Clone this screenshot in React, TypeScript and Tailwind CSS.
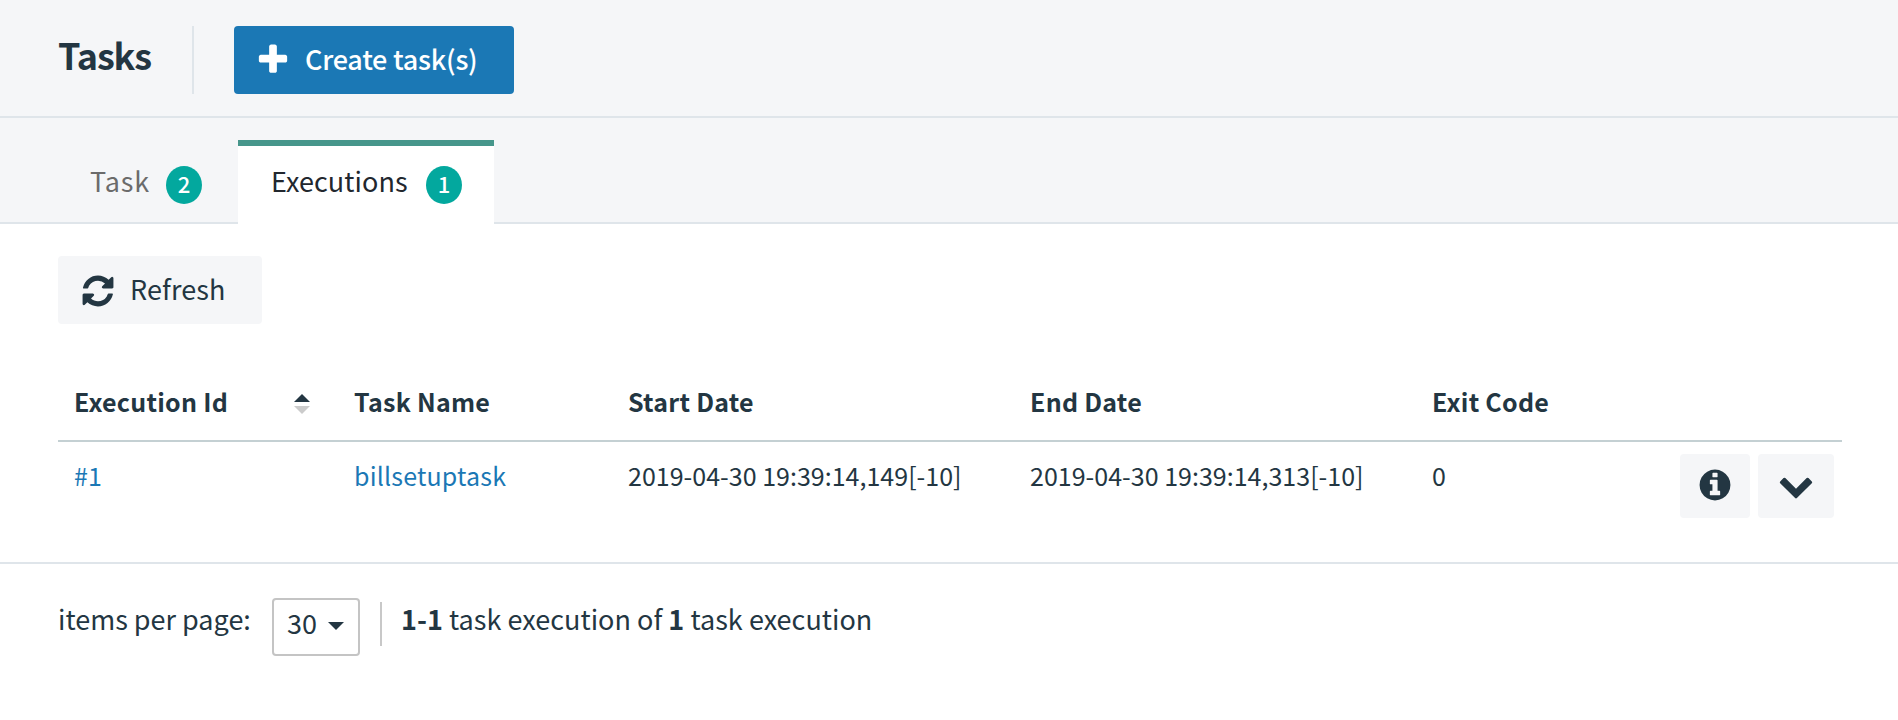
import type { ReactNode } from "react";

function Icon({ d, className }: { d: string; className: string }) {
  return (
    <svg viewBox="0 0 1792 1792" fill="currentColor" className={className} aria-hidden="true">
      <path d={d} />
    </svg>
  );
}

const PLUS =
  "M1600 736v192q0 40-28 68t-68 28h-416v416q0 40-28 68t-68 28h-192q-40 0-68-28t-28-68v-416h-416q-40 0-68-28t-28-68v-192q0-40 28-68t68-28h416v-416q0-40 28-68t68-28h192q40 0 68 28t28 68v416h416q40 0 68 28t28 68z";
const REFRESH =
  "M1639 1056q0 5-1 7-64 268-268 434.5t-478 166.5q-146 0-282.5-55t-243.5-157l-129 129q-19 19-45 19t-45-19-19-45v-448q0-26 19-45t45-19h448q26 0 45 19t19 45-19 45l-137 137q71 66 161 102t187 36q134 0 250-65t186-179q11-17 53-117 8-23 30-23h192q13 0 22.5 9.5t9.5 22.5zm25-800v448q0 26-19 45t-45 19h-448q-26 0-45-19t-19-45 19-45l138-138q-148-137-349-137-134 0-250 65t-186 179q-11 17-53 117-8 23-30 23h-199q-13 0-22.5-9.5t-9.5-22.5v-7q65-268 270-434.5t480-166.5q146 0 284 55.5t245 156.5l130-129q19-19 45-19t45 19 19 45z";
const CHEVRON =
  "M1683 808l-742 741q-19 19-45 19t-45-19l-742-741q-19-19-19-45.5t19-45.5l166-165q19-19 45-19t45 19l531 531 531-531q19-19 45-19t45 19l166 165q19 19 19 45.5t-19 45.5z";
const INFO =
  "M1152 1376v-160q0-14-9-23t-23-9h-96v-512q0-14-9-23t-23-9h-320q-14 0-23 9t-9 23v160q0 14 9 23t23 9h96v320h-96q-14 0-23 9t-9 23v160q0 14 9 23t23 9h448q14 0 23-9t9-23zm-128-896v-160q0-14-9-23t-23-9h-192q-14 0-23 9t-9 23v160q0 14 9 23t23 9h192q14 0 23-9t9-23zm640 416q0 209-103 385.5t-279.5 279.5-385.5 103-385.5-103-279.5-279.5-103-385.5 103-385.5 279.5-279.5 385.5-103 385.5 103 279.5 279.5 103 385.5z";

function Badge({ children }: { children: ReactNode }) {
  return (
    <span className="h-[38px] w-9 rounded-[50%] bg-[#03a89e] text-center text-[22px] leading-[35px] font-medium text-white">
      {children}
    </span>
  );
}

export default function App() {
  return (
    <div className="h-[720px] w-full overflow-hidden bg-white font-['Noto_Sans_CJK_SC',sans-serif] text-[27px] whitespace-nowrap text-[#233642]">
      <header className="flex h-[118px] border-b-2 border-[#dfe5ea] bg-[#f5f6f8] pt-[26px] pl-[58px]">
        <h1 className="h-[68px] w-[136px] border-r-2 border-[#dfe5ea] text-[36px] leading-[57px] font-bold tracking-[-1.1px]">
          Tasks
        </h1>
        <button className="ml-10 flex h-[68px] w-[280px] items-center rounded bg-[#1b78b5] pl-[21px] text-white">
          <Icon d={PLUS} className="-mt-px h-9 w-9" />
          <span className="ml-[14px] pb-[2px] leading-[64px] font-medium tracking-[-0.25px]">Create task(s)</span>
        </button>
      </header>

      <nav className="flex h-[106px] items-end bg-[#f5f6f8]">
        <div className="flex h-[84px] w-[238px] items-start border-b-2 border-[#dfe5ea] pt-[26px] pl-[90px] text-[#6b6b6b]">
          <span className="w-[76px] leading-[29px] tracking-[0.8px]">Task</span>
          <Badge>2</Badge>
        </div>
        <div className="flex h-[84px] w-[256px] items-start border-t-[6px] border-[#46968b] bg-white pt-5 pl-[33px] text-[#22272e]">
          <span className="w-[155px] leading-[29px] tracking-[0.05px]">Executions</span>
          <Badge>1</Badge>
        </div>
        <div className="h-[84px] flex-1 border-b-2 border-[#dfe5ea]" />
      </nav>

      <main className="h-[340px] border-b-2 border-[#dfe5ea] pt-8 pl-[58px]">
        <button className="flex h-[68px] w-[204px] items-center rounded bg-[#f5f6f8] pl-[22px]">
          <Icon d={REFRESH} className="mt-px h-9 w-9" />
          <span className="ml-[14px] pb-[2px] leading-[64px] tracking-[0.1px]">Refresh</span>
        </button>

        <div className="mt-[42px] w-[1784px] text-[25px]">
          <div className="grid h-[76px] grid-cols-[280px_274px_402px_402px_1fr] border-b-2 border-[#c4d0d3] pl-4 leading-[71px] font-bold tracking-[0.25px]">
            <div className="flex items-start justify-between pr-[44px]">
              <span>Execution Id</span>
              <svg viewBox="0 0 16 20" className="mt-7 h-5 w-4" aria-hidden="true">
                <path d="M0 8L8 0L16 8Z" fill="#233642" />
                <path d="M0 12L8 20L16 12Z" fill="#cbcbcb" />
              </svg>
            </div>
            <span>Task Name</span>
            <span>Start Date</span>
            <span>End Date</span>
            <span>Exit Code</span>
          </div>
          <div className="grid grid-cols-[280px_274px_402px_402px_1fr] pl-4 leading-[67px]">
            <a className="text-[#1b78b5]">#1</a>
            <a className="tracking-[0.18px] text-[#1b78b5]">billsetuptask</a>
            <span className="tracking-[0.02px]">2019-04-30 19:39:14,149[-10]</span>
            <span className="tracking-[0.02px]">2019-04-30 19:39:14,313[-10]</span>
            <div className="flex">
              <span className="w-[248px]">0</span>
              <button className="mt-3 flex h-16 w-[70px] items-center justify-center rounded bg-[#f5f6f8] pb-[2px]">
                <Icon d={INFO} className="h-9 w-9" />
              </button>
              <button className="mt-3 ml-2 flex h-16 w-[76px] items-center justify-center rounded bg-[#f5f6f8] pb-[2px]">
                <Icon d={CHEVRON} className="h-9 w-9" />
              </button>
            </div>
          </div>
        </div>
      </main>

      <footer className="flex pt-[34px] pl-[58px]">
        <span className="w-[214px] leading-[41px]">items per page:</span>
        <button className="flex h-[58px] w-[88px] items-start rounded border-2 border-[#c4c4c4] pl-[13px]">
          <span className="leading-[45px]">30</span>
          <svg viewBox="0 0 16 8" className="mt-[22px] ml-[11px] h-2 w-4" aria-hidden="true">
            <path d="M0 0H16L8 8Z" fill="#233642" />
          </svg>
        </button>
        <div className="mt-1 ml-5 h-11 w-[2px] bg-[#c8c8c8]" />
        <span className="ml-[19px] leading-[41px] tracking-[0.03px]">
          <b>1-1</b> task execution of <b>1</b> task execution
        </span>
      </footer>
    </div>
  );
}
